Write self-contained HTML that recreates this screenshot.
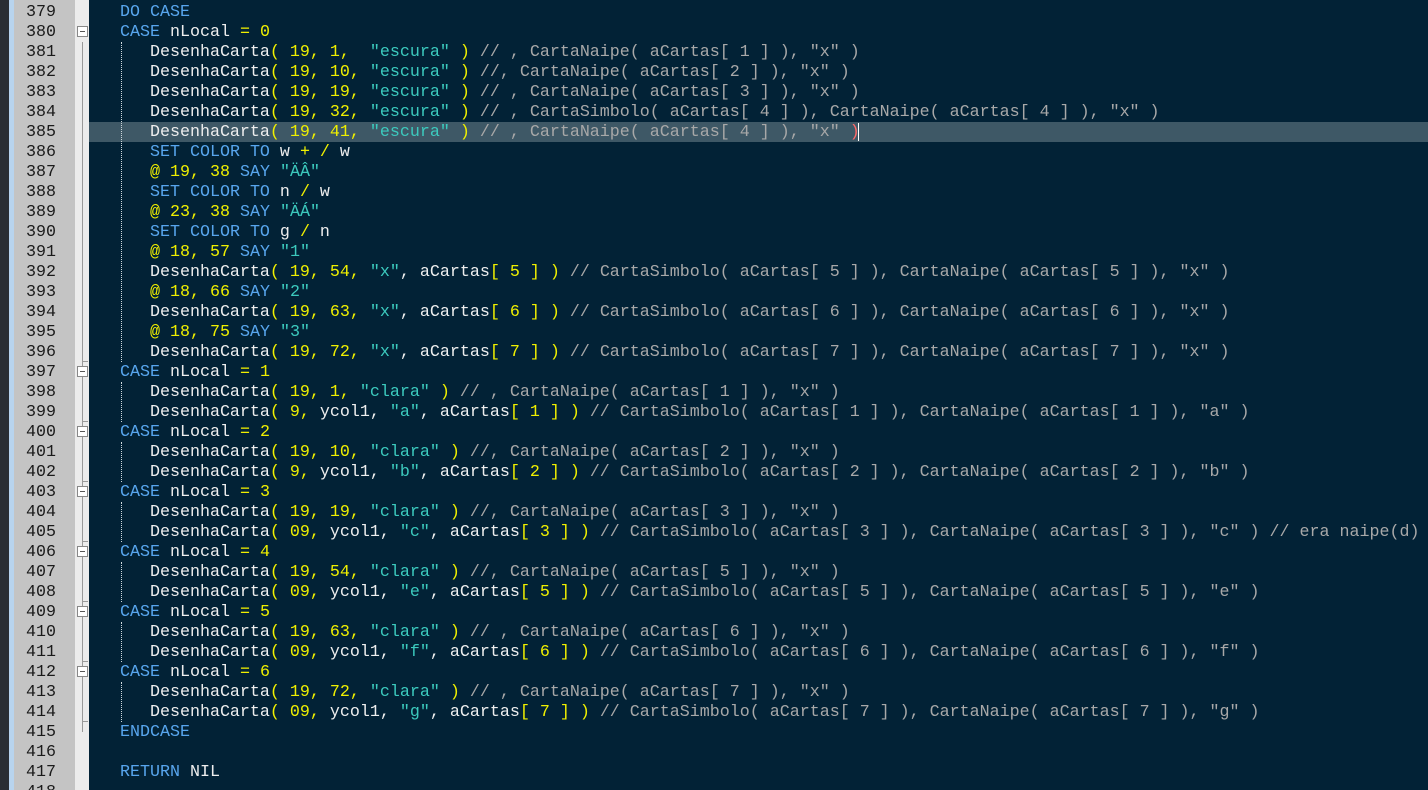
<!DOCTYPE html><html><head><meta charset="utf-8"><style>
html,body{margin:0;width:1428px;height:790px;overflow:hidden}
body{background:#022236;position:relative;font-family:"Liberation Mono",monospace}
#ls{position:absolute;left:0;top:0;width:9px;height:790px;background:#2a2e33}
#lb{position:absolute;left:9px;top:0;width:5px;height:790px;background:#b8d4ee}
#gut{position:absolute;left:14px;top:0;width:61px;height:790px;background:#c4c4c4}
#fold{position:absolute;left:75px;top:0;width:14px;height:790px;background:#ececec}
.hl{position:absolute;left:89px;top:122px;width:1339px;height:20px;background:#3e5866}
pre{margin:0;position:absolute;top:3px;font-size:16.67px;line-height:20px;font-family:"Liberation Mono",monospace}
#nums{left:14px;width:42px;text-align:right;color:#1a1a1a}
#code{left:90px;color:#eeeeee}
y{color:#f0f000}t{color:#3ccabe}k{color:#58a6ee}c{color:#a8a8a8}r{color:#ff6a6a}
.box{position:absolute;left:77px;width:9px;height:9px;border:1px solid #888;background:#fff}
.box:after{content:"";position:absolute;left:2px;top:4px;width:5px;height:1px;background:#555}
.vl{position:absolute;left:82px;width:1px;background:#999}
.tk{position:absolute;left:82px;width:6px;height:1px;background:#999}
.dg{position:absolute;left:121px;width:0;border-left:1px dotted #cfd8dc}
</style></head><body>
<div id="ls"></div><div id="lb"></div><div id="gut"></div><div id="fold"></div>
<div class="hl"></div>
<div class="vl" style="top:42px;height:690px"></div>
<div class="box" style="top:26px"></div>
<div class="box" style="top:366px"></div>
<div class="box" style="top:426px"></div>
<div class="box" style="top:486px"></div>
<div class="box" style="top:546px"></div>
<div class="box" style="top:606px"></div>
<div class="box" style="top:666px"></div>
<div class="tk" style="top:361px"></div><div class="tk" style="top:421px"></div><div class="tk" style="top:481px"></div><div class="tk" style="top:541px"></div><div class="tk" style="top:601px"></div><div class="tk" style="top:661px"></div><div class="tk" style="top:721px"></div>
<div class="dg" style="top:42px;height:320px"></div>
<div class="dg" style="top:382px;height:40px"></div>
<div class="dg" style="top:442px;height:40px"></div>
<div class="dg" style="top:502px;height:40px"></div>
<div class="dg" style="top:562px;height:40px"></div>
<div class="dg" style="top:622px;height:40px"></div>
<div class="dg" style="top:682px;height:40px"></div>
<pre id="nums">379
380
381
382
383
384
385
386
387
388
389
390
391
392
393
394
395
396
397
398
399
400
401
402
403
404
405
406
407
408
409
410
411
412
413
414
415
416
417
418</pre>
<pre id="code">   <k>DO CASE</k>
   <k>CASE</k> nLocal <y>= 0</y>
      DesenhaCarta<y>( 19, 1,</y>  <t>"escura"</t> <y>)</y> <c>// , CartaNaipe( aCartas[ 1 ] ), "x" )</c>
      DesenhaCarta<y>( 19, 10,</y> <t>"escura"</t> <y>)</y> <c>//, CartaNaipe( aCartas[ 2 ] ), "x" )</c>
      DesenhaCarta<y>( 19, 19,</y> <t>"escura"</t> <y>)</y> <c>// , CartaNaipe( aCartas[ 3 ] ), "x" )</c>
      DesenhaCarta<y>( 19, 32,</y> <t>"escura"</t> <y>)</y> <c>// , CartaSimbolo( aCartas[ 4 ] ), CartaNaipe( aCartas[ 4 ] ), "x" )</c>
      DesenhaCarta<y>( 19, 41,</y> <t>"escura"</t> <y>)</y> <c>// , CartaNaipe( aCartas[ 4 ] ), "x" </c><r>)</r>
      <k>SET COLOR TO</k> w <y>+ /</y> w
      <y>@ 19, 38</y> <k>SAY</k> <t>"ÄÂ"</t>
      <k>SET COLOR TO</k> n <y>/</y> w
      <y>@ 23, 38</y> <k>SAY</k> <t>"ÄÁ"</t>
      <k>SET COLOR TO</k> g <y>/</y> n
      <y>@ 18, 57</y> <k>SAY</k> <t>"1"</t>
      DesenhaCarta<y>( 19, 54,</y> <t>"x"</t>, aCartas<y>[ 5 ] )</y> <c>// CartaSimbolo( aCartas[ 5 ] ), CartaNaipe( aCartas[ 5 ] ), "x" )</c>
      <y>@ 18, 66</y> <k>SAY</k> <t>"2"</t>
      DesenhaCarta<y>( 19, 63,</y> <t>"x"</t>, aCartas<y>[ 6 ] )</y> <c>// CartaSimbolo( aCartas[ 6 ] ), CartaNaipe( aCartas[ 6 ] ), "x" )</c>
      <y>@ 18, 75</y> <k>SAY</k> <t>"3"</t>
      DesenhaCarta<y>( 19, 72,</y> <t>"x"</t>, aCartas<y>[ 7 ] )</y> <c>// CartaSimbolo( aCartas[ 7 ] ), CartaNaipe( aCartas[ 7 ] ), "x" )</c>
   <k>CASE</k> nLocal <y>= 1</y>
      DesenhaCarta<y>( 19, 1,</y> <t>"clara"</t> <y>)</y> <c>// , CartaNaipe( aCartas[ 1 ] ), "x" )</c>
      DesenhaCarta<y>( 9,</y> ycol1, <t>"a"</t>, aCartas<y>[ 1 ] )</y> <c>// CartaSimbolo( aCartas[ 1 ] ), CartaNaipe( aCartas[ 1 ] ), "a" )</c>
   <k>CASE</k> nLocal <y>= 2</y>
      DesenhaCarta<y>( 19, 10,</y> <t>"clara"</t> <y>)</y> <c>//, CartaNaipe( aCartas[ 2 ] ), "x" )</c>
      DesenhaCarta<y>( 9,</y> ycol1, <t>"b"</t>, aCartas<y>[ 2 ] )</y> <c>// CartaSimbolo( aCartas[ 2 ] ), CartaNaipe( aCartas[ 2 ] ), "b" )</c>
   <k>CASE</k> nLocal <y>= 3</y>
      DesenhaCarta<y>( 19, 19,</y> <t>"clara"</t> <y>)</y> <c>//, CartaNaipe( aCartas[ 3 ] ), "x" )</c>
      DesenhaCarta<y>( 09,</y> ycol1, <t>"c"</t>, aCartas<y>[ 3 ] )</y> <c>// CartaSimbolo( aCartas[ 3 ] ), CartaNaipe( aCartas[ 3 ] ), "c" ) // era naipe(d)</c>
   <k>CASE</k> nLocal <y>= 4</y>
      DesenhaCarta<y>( 19, 54,</y> <t>"clara"</t> <y>)</y> <c>//, CartaNaipe( aCartas[ 5 ] ), "x" )</c>
      DesenhaCarta<y>( 09,</y> ycol1, <t>"e"</t>, aCartas<y>[ 5 ] )</y> <c>// CartaSimbolo( aCartas[ 5 ] ), CartaNaipe( aCartas[ 5 ] ), "e" )</c>
   <k>CASE</k> nLocal <y>= 5</y>
      DesenhaCarta<y>( 19, 63,</y> <t>"clara"</t> <y>)</y> <c>// , CartaNaipe( aCartas[ 6 ] ), "x" )</c>
      DesenhaCarta<y>( 09,</y> ycol1, <t>"f"</t>, aCartas<y>[ 6 ] )</y> <c>// CartaSimbolo( aCartas[ 6 ] ), CartaNaipe( aCartas[ 6 ] ), "f" )</c>
   <k>CASE</k> nLocal <y>= 6</y>
      DesenhaCarta<y>( 19, 72,</y> <t>"clara"</t> <y>)</y> <c>// , CartaNaipe( aCartas[ 7 ] ), "x" )</c>
      DesenhaCarta<y>( 09,</y> ycol1, <t>"g"</t>, aCartas<y>[ 7 ] )</y> <c>// CartaSimbolo( aCartas[ 7 ] ), CartaNaipe( aCartas[ 7 ] ), "g" )</c>
   <k>ENDCASE</k>

   <k>RETURN</k> NIL
</pre>
<div style="position:absolute;left:858px;top:123px;width:1px;height:18px;background:#fff"></div>
</body></html>
